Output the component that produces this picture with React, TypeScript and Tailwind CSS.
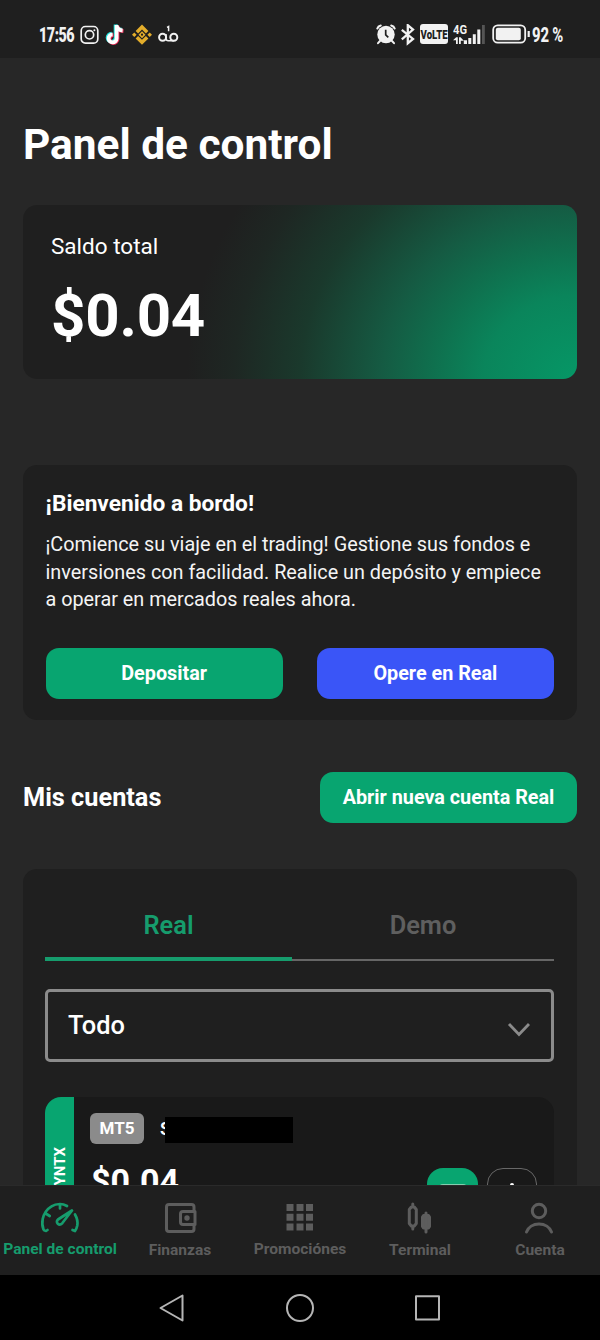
import type { ReactNode } from "react";

function StatusBar() {
  return (
    <header className="flex h-[58px] shrink-0 items-start justify-between bg-[#1f1f1f] pt-6 pr-[35px] pl-[39px] text-[#f2f2f2]">
      <div className="flex h-[22px] items-center">
        <div className="w-[35px] pt-[2px]">
          <span className="inline-block origin-left scale-x-[0.7] text-[20.500px] leading-[22px] font-black tracking-[-0.7px] whitespace-nowrap">17:56</span>
        </div>
        <svg className="ml-[6px]" width="20" height="20" viewBox="0 0 20 20" fill="none" stroke="currentColor" strokeWidth="1.7">
          <rect x="1.2" y="1.5" width="16.6" height="16.6" rx="4.2" />
          <circle cx="9.5" cy="9.8" r="4.2" />
          <circle cx="14.400" cy="5.2" r="1" fill="currentColor" stroke="none" />
        </svg>
        <svg className="ml-[5px]" width="20" height="22" viewBox="0 0 20 22">
          <g fill="none" strokeWidth="3.8">
            <path d="M11 1v13.200a4 4 0 1 1-4-4.100M11 1c.3 3 2.600 4.900 6 5.200" stroke="#25e5df" transform="translate(-.4 -.5)" />
            <path d="M11 1v13.200a4 4 0 1 1-4-4.100M11 1c.3 3 2.600 4.900 6 5.200" stroke="#f22d58" transform="translate(1.500 1)" />
            <path d="M11 .6v13.600a4 4 0 1 1-4-4.100M11 1c.3 3 2.600 4.900 6 5.200" stroke="#fff" transform="translate(.6 .3)" />
          </g>
        </svg>
        <svg className="ml-[7px]" width="20" height="22" viewBox="0 0 20 22" fill="#e3ad2b">
          <path d="M10 .5 16.400 6.900l-2.500 2.500L10 5.500 6.100 9.400 3.600 6.900zM10 20.800 16.400 14.400l-2.500-2.500L10 15.800l-3.900-3.900L3.600 14.400zM2.300 8.400 4.600 10.700l-2.300 2.300L0 10.700zM17.700 8.400 20 10.700l-2.300 2.300L15.400 10.700zM10 7.200l3.500 3.500-3.500 3.500L6.500 10.700z" />
          <circle cx="10" cy="10.700" r="1.100" fill="#1f1f1f" />
        </svg>
        <svg className="ml-[6px]" width="21" height="22" viewBox="0 0 21 22" fill="none" stroke="currentColor" strokeWidth="2">
          <circle cx="4.600" cy="13.200" r="3.500" />
          <circle cx="15.800" cy="13.200" r="3.500" />
          <path d="M8 10v4.500q0 2.200 2.200 2.200h5.600M9 3.300l1.600-.8v4.800" strokeWidth="1.500" />
        </svg>
      </div>
      <div className="flex h-[22px] items-center">
        <svg width="20" height="22" viewBox="0 0 20 22">
          <g stroke="#f2f2f2" strokeWidth="2" fill="none" strokeLinecap="round">
            <path d="M1.300 4.600Q2 2.200 4.800 1.500M18.700 4.600Q18 2.200 15.200 1.500M4 17l-2 2.200M16 17l2 2.200" />
          </g>
          <circle cx="10" cy="10.500" r="8.700" fill="#f2f2f2" />
          <path d="M9.700 5.700v5.200l2.600 2.500" stroke="#1f1f1f" strokeWidth="1.700" fill="none" />
        </svg>
        <svg className="ml-[5px]" width="14" height="22" viewBox="0 0 14 22" fill="none" stroke="currentColor" strokeWidth="2.300">
          <path d="M.8 5.800 12 14.900l-5.200 4.300V1.200L12 5.600.8 15.300" />
        </svg>
        <div className="mb-[2px] ml-[5px] flex h-5 w-7 items-center justify-center rounded-[3px] bg-[#f2f2f2] text-[#1f1f1f]">
          <span className="inline-block scale-x-[0.71] text-[13.500px] font-black">VoLTE</span>
        </div>
        <svg className="mb-[1px] ml-[5px]" width="33" height="22" viewBox="0 0 33 22" fill="#f2f2f2">
          <text x="0" y="10" fontSize="12" fontWeight="700" textLength="14" lengthAdjust="spacingAndGlyphs" className="font-[Roboto]">4G</text>
          <path d="M0 16.300 3.200 13.300H4.800V20H3V16.300zM6 13.300h1.600L10.800 16.800H7.800V20H6zM10.800 16.200h3.200V20h-3.200zM15.300 14h3V20h-3zM19.800 10.200h3V20h-3zM24.300 5.500h3V20h-3z" />
          <path d="M29 1h2.800v19H29z" fill="#555" />
        </svg>
        <svg className="ml-[6px]" width="39" height="22" viewBox="0 0 39 22">
          <rect x="1.200" y="1.300" width="32" height="17.400" rx="4.500" fill="none" stroke="#f2f2f2" strokeWidth="1.800" />
          <rect x="3.800" y="3.800" width="25" height="12.400" rx="2" fill="#f2f2f2" />
          <path d="M35.600 7h2.200v6h-2.200z" fill="#f2f2f2" />
        </svg>
        <div className="ml-[1px] w-[33px] pt-[2px]">
          <span className="inline-block origin-left scale-x-[0.74] text-[20px] leading-[22px] font-extrabold tracking-[-0.2px] whitespace-nowrap">92 %</span>
        </div>
      </div>
    </header>
  );
}

function BalanceCard() {
  return (
    <section className="mt-[32px] h-[174px] rounded-[14px] bg-[radial-gradient(390px_348px_at_100%_100%,#069766_0%,#0a855b_24%,#0f704e_37%,#155b43_50%,#1a392c_71%,#1e2723_88%,#1f1f1f_100%)] pt-[26px] pl-7">
      <div className="text-[22.500px] leading-[31px]">Saldo total</div>
      <div className="mt-[17px] text-[60px] leading-[73px] font-bold tracking-[-0.2px]">$0.04</div>
    </section>
  );
}

function WelcomeCard() {
  return (
    <section className="mt-[86px] h-[255px] rounded-[14px] bg-[#1f1f1f] pt-[23px] pr-[23px] pl-[22.500px]">
      <h2 className="text-[22.700px] leading-[31px] font-bold">¡Bienvenido a bordo!</h2>
      <p className="mt-[12px] text-[19.820px] leading-[27.700px] whitespace-nowrap text-[#f4f4f4]">
        ¡Comience su viaje en el trading! Gestione sus fondos e
        <br />
        inversiones con facilidad. Realice un depósito y empiece
        <br />
        a operar en mercados reales ahora.
      </p>
      <div className="mt-[34px] grid grid-cols-2 gap-[34px] text-[19.800px] font-bold">
        <button className="h-[51px] rounded-[13px] bg-[#08a570]">Depositar</button>
        <button className="h-[51px] rounded-[13px] bg-[#3a55f7]">Opere en Real</button>
      </div>
    </section>
  );
}

function AccountsCard() {
  return (
    <section className="mt-[46px] h-[400px] shrink-0 rounded-[14px] bg-[#1f1f1f] pr-[23px] pl-[22px]">
      <div className="flex h-[92px] border-b-2 border-[#666] pt-[38px] text-[25.400px] leading-[36px] font-semibold">
        <div className="-mb-[2px] w-[247px] border-b-4 border-[#169c6d] text-center text-[#169c6d]">Real</div>
        <div className="flex-1 text-center text-[#5f5f5f]">Demo</div>
      </div>
      <div className="mt-[28px] flex h-[73px] items-center justify-between rounded-[5px] border-[3px] border-[#8b8b8b] pr-[20px] pl-[20px]">
        <span className="text-[25.400px] font-medium">Todo</span>
        <svg className="mt-[8px]" width="24" height="16" viewBox="0 0 24 16" fill="none" stroke="#8b8b8b" strokeWidth="2.800">
          <path d="m2 2 10 10.500L22 2" />
        </svg>
      </div>
      <div className="mt-[35px] flex h-[160px] overflow-hidden rounded-[16px] bg-[#191919]">
        <div className="flex w-[29px] justify-center bg-[#08a570] pt-[50px]">
          <span className="h-fit rotate-180 text-[15px] leading-[28px] font-bold [writing-mode:vertical-rl]">SYNTX</span>
        </div>
        <div className="flex-1 pt-[16px] pl-4">
          <div className="flex items-center">
            <span className="flex h-[31px] w-[54px] items-center justify-center rounded-[6px] bg-[#8b8b8b] text-[17px] font-bold">MT5</span>
            <span className="ml-[16px] w-[5px] overflow-hidden text-[18px] font-semibold">S</span>
            <span className="mt-[2px] h-[26px] w-[128px] bg-black" />
          </div>
          <div className="mt-[15px] ml-px text-[34px] leading-[44px] font-bold">$0.04</div>
        </div>
        <div className="flex gap-[9px] pt-[71px] pr-[17px]">
          <div className="flex h-[51px] w-[51px] justify-center rounded-[16px] bg-[#08a570] pt-[16px]">
            <div className="h-5 w-7 rounded-sm border-2 border-[#82ceae]" />
          </div>
          <div className="flex h-[51px] w-[50px] justify-center rounded-[16px] border border-[#686868] pt-[14px]">
            <div className="h-1 w-1 rounded-full bg-white" />
          </div>
        </div>
      </div>
    </section>
  );
}

function NavItem({ label, active = false, raised = false, children }: { label: string; active?: boolean; raised?: boolean; children: ReactNode }) {
  return (
    <div className={`flex w-[120px] flex-col items-center ${active ? "text-[#169c6d]" : "text-[#5d5d5d]"}`}>
      <svg className="mt-[13px]" width="40" height="38" viewBox="0 0 40 38" fill="none" stroke="currentColor" strokeWidth="3" strokeLinecap="round" strokeLinejoin="round">
        {children}
      </svg>
      <span className={`text-[15.550px] leading-5 font-bold whitespace-nowrap ${raised ? "mt-[2px]" : "mt-[3px]"}`}>{label}</span>
    </div>
  );
}

function BottomNav() {
  return (
    <nav className="flex h-[90px] shrink-0 border-t border-[#2a2a2a] bg-[#1f1f1f]">
      <NavItem label="Panel de control" active raised>
        <path d="M7.500 31 6 32Q4 31.700 3.500 30.500 1.600 26 2.700 20 4.600 11.500 11.500 7.300 15 5 20 5q3.500 0 7 2M35 15.500q3.200 5.500 2.300 11-.6 3-2.300 5.500L32.500 31M20 5.500v4M6.500 15l3.200 2M32 11.500 18 20.500c-3.200 3 1.200 7 4.200 3.800z" strokeWidth="2.700" />
      </NavItem>
      <NavItem label="Finanzas">
        <path d="M34 12V8q0-2.500-2.500-2.500H9Q6.500 5.500 6.500 8v22q0 2.500 2.500 2.500h22.500Q34 32.500 34 30v-4M23 12.500h12v13H23q-2.500 0-2.500-2.500v-8q0-2.500 2.500-2.500z" />
        <circle cx="27" cy="19" r="2.700" fill="currentColor" stroke="none" />
      </NavItem>
      <NavItem label="Promociónes" raised>
        <path d="M6.500 5h7v7h-7zM16.500 5h7v7h-7zM26 5h7v7h-7zM6.500 14.700h7v7h-7zM16.500 14.700h7v7h-7zM26 14.700h7v7h-7zM6.500 24.500h7v7h-7zM16.500 24.500h7v7h-7zM26 24.500h7v7h-7z" fill="currentColor" stroke="none" />
      </NavItem>
      <NavItem label="Terminal">
        <path d="M12.800 5v3M12.800 27v3M9.300 10.500l2-2.500h3l2 2.500v14l-2 2.500h-3l-2-2.500z" />
        <path d="M26 14v19M22.500 18l1-1.500h5l1 1.500v9.500l-1 1.500h-5l-1-1.500z" fill="currentColor" />
      </NavItem>
      <NavItem label="Cuenta">
        <circle cx="19" cy="12" r="6.700" />
        <path d="M6.500 33c1.700-4.800 6.600-8 12.500-8s10.800 3.200 12.500 8" />
      </NavItem>
    </nav>
  );
}

function SystemNav() {
  return (
    <footer className="flex h-[65px] shrink-0 items-center justify-center gap-[99px] bg-black">
      <svg width="28" height="32" viewBox="0 0 28 32" fill="none" stroke="#b5b5b5" strokeWidth="2" strokeLinejoin="round">
        <path d="M24.500 3.500v25L2.500 16z" />
      </svg>
      <svg width="30" height="32" viewBox="0 0 30 32" fill="none" stroke="#b5b5b5" strokeWidth="2">
        <circle cx="15" cy="16" r="13" />
      </svg>
      <svg width="28" height="32" viewBox="0 0 28 32" fill="none" stroke="#b5b5b5" strokeWidth="2" strokeLinejoin="round">
        <path d="M2 4.200h23v23.300H2z" />
      </svg>
    </footer>
  );
}

export default function App() {
  return (
    <div className="flex h-[1340px] w-[600px] flex-col overflow-hidden bg-[#272727] font-[Roboto,sans-serif] text-white">
      <StatusBar />
      <main className="min-h-0 flex-1 overflow-hidden px-[23px] pt-[59px]">
        <h1 className="text-[42.400px] leading-[56px] font-bold">Panel de control</h1>
        <BalanceCard />
        <WelcomeCard />
        <div className="mt-[52px] flex items-center justify-between">
          <h2 className="text-[25.300px] font-bold">Mis cuentas</h2>
          <button className="h-[51px] w-[257px] rounded-[13px] bg-[#08a570] text-[19.800px] font-bold">Abrir nueva cuenta Real</button>
        </div>
        <AccountsCard />
      </main>
      <BottomNav />
      <SystemNav />
    </div>
  );
}
